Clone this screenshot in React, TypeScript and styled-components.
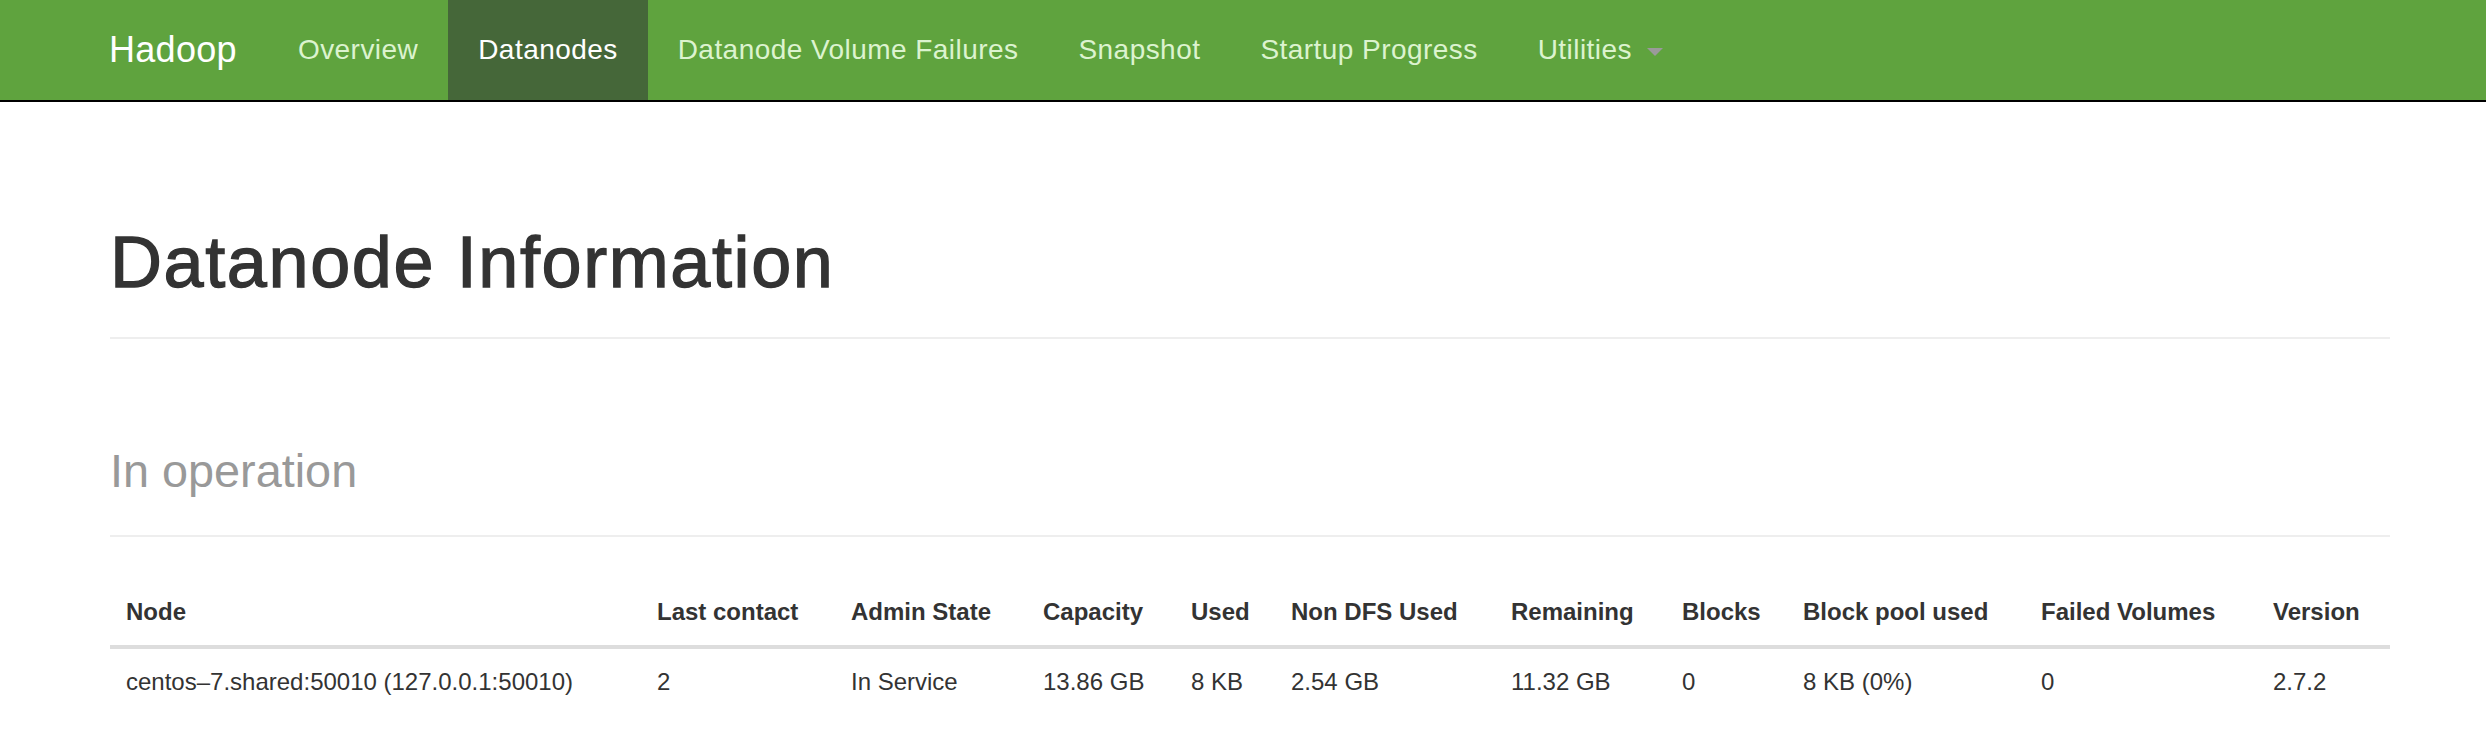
import React from "react";
import styled, { createGlobalStyle } from "styled-components";

const GlobalStyle = createGlobalStyle`
  html, body {
    margin: 0;
    padding: 0;
    background: #ffffff;
  }
  body {
    font-family: "Liberation Sans", Helvetica, Arial, sans-serif;
    color: #333333;
  }
  * { box-sizing: border-box; }
`;

const NavBar = styled.header`
  background: #5fa33e;
  border-bottom: 2px solid #000000;
  height: 102px;
`;

const NavInner = styled.div`
  display: flex;
  align-items: stretch;
  height: 100px;
  padding-left: 79px;
`;

const Brand = styled.a`
  display: flex;
  align-items: center;
  padding: 0 31px 0 30px;
  font-size: 36px;
  color: #ffffff;
  text-decoration: none;
  letter-spacing: 0.3px;
`;

const NavList = styled.ul`
  display: flex;
  list-style: none;
  margin: 0;
  padding: 0;
`;

const NavItem = styled.li<{ $active?: boolean }>`
  display: flex;
  align-items: center;
  padding: 0 30px;
  font-size: 28px;
  letter-spacing: 0.45px;
  color: ${(p) => (p.$active ? "#ffffff" : "#dcf3cf")};
  background: ${(p) => (p.$active ? "#456739" : "transparent")};
`;

const Caret = styled.span`
  display: inline-block;
  width: 0;
  height: 0;
  margin-left: 15px;
  margin-top: 4px;
  border-left: 8px solid transparent;
  border-right: 8px solid transparent;
  border-top: 8px solid #9a9a9a;
`;

const Container = styled.main`
  width: 2280px;
  margin-left: 110px;
`;

const PageHeader = styled.div<{ $top: number; $bottom: number }>`
  margin-top: ${(p) => p.$top}px;
  padding-bottom: ${(p) => p.$bottom}px;
  border-bottom: 2px solid #eeeeee;
`;

const Title = styled.h1`
  margin: 0;
  font-size: 72px;
  line-height: 1.1;
  font-weight: 400;
  color: #333333;
  letter-spacing: 1.6px;
  -webkit-text-stroke: 1.3px #333333;
`;

const SubTitle = styled.h2`
  margin: 0;
  font-size: 46.8px;
  line-height: 1.1;
  font-weight: 400;
  color: #999999;
`;

const Table = styled.table`
  margin-top: 42px;
  width: 2280px;
  table-layout: fixed;
  border-collapse: collapse;
  font-size: 24px;
  line-height: 1.42857;
  color: #333333;
`;

const HeadCell = styled.th`
  text-align: left;
  font-weight: 700;
  padding: 16px;
  border-bottom: 4px solid #dddddd;
  white-space: nowrap;
`;

const BodyCell = styled.td`
  text-align: left;
  padding: 16px;
  white-space: nowrap;
`;

const columns = [
  { name: "Node", width: 531, value: "centos–7.shared:50010 (127.0.0.1:50010)" },
  { name: "Last contact", width: 194, value: "2" },
  { name: "Admin State", width: 192, value: "In Service" },
  { name: "Capacity", width: 148, value: "13.86 GB" },
  { name: "Used", width: 100, value: "8 KB" },
  { name: "Non DFS Used", width: 220, value: "2.54 GB" },
  { name: "Remaining", width: 171, value: "11.32 GB" },
  { name: "Blocks", width: 121, value: "0" },
  { name: "Block pool used", width: 238, value: "8 KB (0%)" },
  { name: "Failed Volumes", width: 232, value: "0" },
  { name: "Version", width: 133, value: "2.7.2" },
];

const navItems = [
  "Overview",
  "Datanodes",
  "Datanode Volume Failures",
  "Snapshot",
  "Startup Progress",
];

export default function App() {
  return (
    <>
      <GlobalStyle />
      <NavBar>
        <NavInner>
          <Brand href="#">Hadoop</Brand>
          <NavList>
            {navItems.map((item) => (
              <NavItem key={item} $active={item === "Datanodes"}>
                {item}
              </NavItem>
            ))}
            <NavItem>
              Utilities
              <Caret />
            </NavItem>
          </NavList>
        </NavInner>
      </NavBar>
      <Container>
        <PageHeader $top={121} $bottom={35}>
          <Title>Datanode Information</Title>
        </PageHeader>
        <PageHeader $top={107} $bottom={37}>
          <SubTitle>In operation</SubTitle>
        </PageHeader>
        <Table>
          <colgroup>
            {columns.map((c) => (
              <col key={c.name} style={{ width: c.width }} />
            ))}
          </colgroup>
          <thead>
            <tr>
              {columns.map((c) => (
                <HeadCell key={c.name}>{c.name}</HeadCell>
              ))}
            </tr>
          </thead>
          <tbody>
            <tr>
              {columns.map((c) => (
                <BodyCell key={c.name}>{c.value}</BodyCell>
              ))}
            </tr>
          </tbody>
        </Table>
      </Container>
    </>
  );
}
